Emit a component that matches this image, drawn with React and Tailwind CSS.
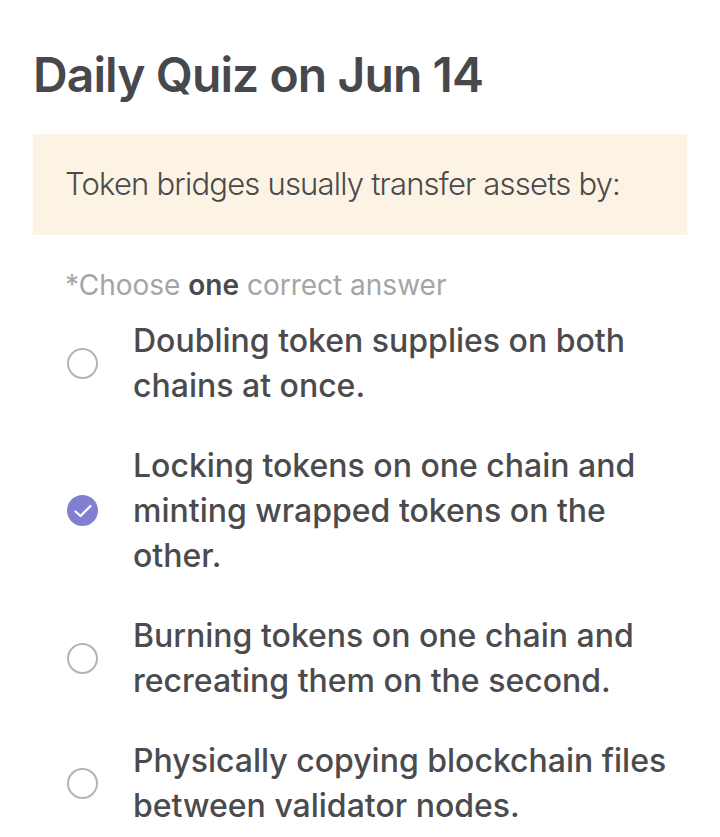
import React from 'react';

const options = [
  { text: 'Doubling token supplies on both chains at once.', checked: false },
  { text: 'Locking tokens on one chain and minting wrapped tokens on the other.', checked: true },
  { text: 'Burning tokens on one chain and recreating them on the second.', checked: false },
  { text: 'Physically copying blockchain files between validator nodes.', checked: false },
];

const Radio = ({ checked }) =>
  checked ? (
    <div className="w-[31px] h-[31px] rounded-full bg-[#8180d0] flex items-center justify-center shrink-0">
      <svg width="24" height="24" viewBox="0 0 24 24" fill="none" stroke="white" strokeWidth="2.2" strokeLinecap="round" strokeLinejoin="round">
        <path d="M4.5 12.5l5 4.5L19.5 7" />
      </svg>
    </div>
  ) : (
    <div className="w-[31px] h-[31px] rounded-full border-2 border-[#b3b3b3] shrink-0" />
  );

const App = () => {
  return (
    <div className="min-h-screen bg-white px-[33px] pt-[40px] text-[#4a4a4d]" style={{ fontFamily: 'Inter, "Open Sans", sans-serif' }}>
      {/* Title */}
      <h1 className="text-[48px] leading-[70px] font-semibold tracking-[-0.9px] text-[#47484c]">Daily Quiz on Jun 14</h1>

      {/* Question box */}
      <div className="mt-[24px] bg-[#fdf3e4] h-[101px] px-[32px] flex items-center">
        <p className="text-[31px] font-light text-[#4a4a4a] tracking-[-0.8px]">Token bridges usually transfer assets by:</p>
      </div>

      {/* Hint */}
      <p className="mt-[30px] pl-[32px] text-[28px] leading-[40px] text-[#a5a5a5]">
        *Choose <span className="font-semibold text-[#4a4a4d]">one</span> correct answer
      </p>

      {/* Options */}
      <div className="mt-[13px] flex flex-col gap-[35px]">
        {options.map((o, i) => (
          <div key={i} className="flex items-center">
            <div className="w-[100px] pl-[34px] flex items-center">
              <Radio checked={o.checked} />
            </div>
            <p className="text-[32px] leading-[45px] font-medium text-[#4b4b4e] tracking-[0px] max-w-[545px]">{o.text}</p>
          </div>
        ))}
      </div>
    </div>
  );
};

export default App;
